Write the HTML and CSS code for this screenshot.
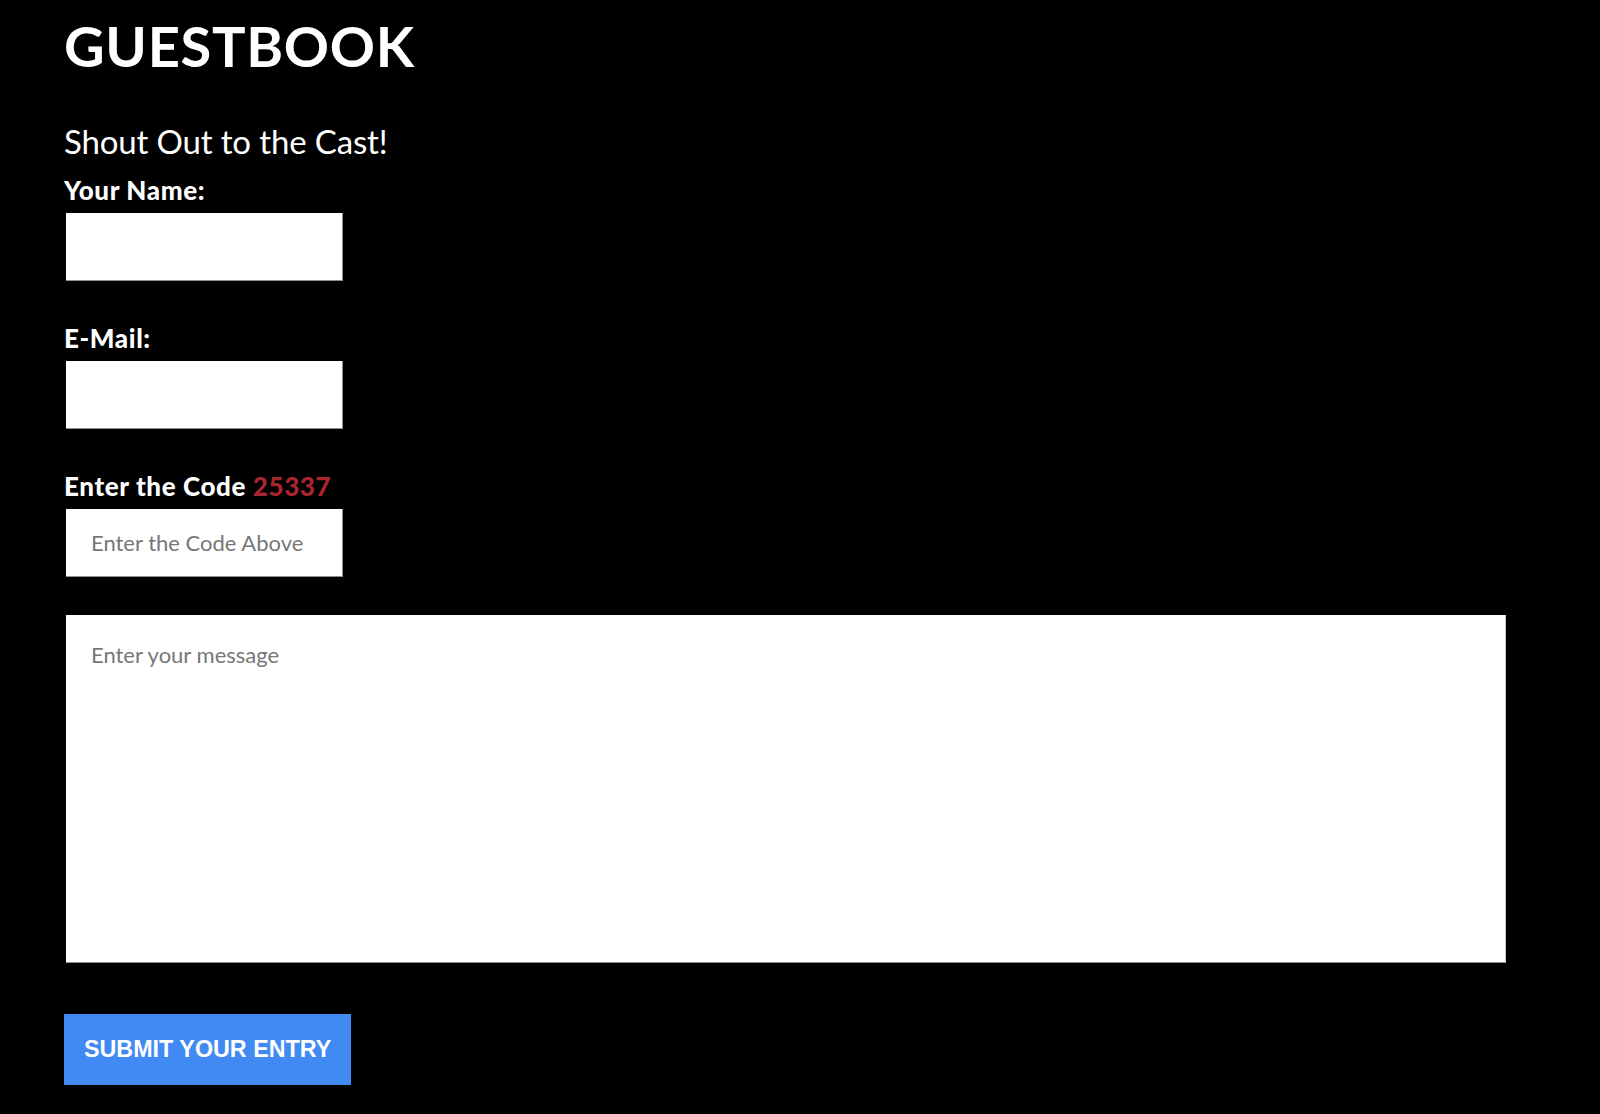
FILE: index.html
```html
<!DOCTYPE html>
<html lang="en">
<head>
  <meta charset="UTF-8">
  <meta name="viewport" content="width=device-width, initial-scale=1.0">
  <title>Guestbook</title>
  <link rel="stylesheet" href="styles.css">
</head>
<body>
  <main class="guestbook">
    <h1>GUESTBOOK</h1>
    <form class="gb-form">
      <h2>Shout Out to the Cast!</h2>

      <label for="gb-name">Your Name:</label>
      <input type="text" id="gb-name" class="field">

      <label for="gb-email" class="spaced">E-Mail:</label>
      <input type="email" id="gb-email" class="field">

      <label for="gb-code" class="spaced">Enter the Code <span class="code">25337</span></label>
      <input type="text" id="gb-code" class="field" placeholder="Enter the Code Above">

      <textarea id="gb-message" placeholder="Enter your message"></textarea>

      <button type="button" class="submit">SUBMIT YOUR ENTRY</button>
    </form>
  </main>
</body>
</html>
```

FILE: styles.css
```css
body {
  margin: 0;
  background-color: #000;
  color: #fff;
  font-family: 'Lato', 'Noto Sans', sans-serif;
}

.guestbook {
  padding: 18px 0 0 64px;
  width: 1444px;
}

h1 {
  margin: 0;
  font-size: 56px;
  line-height: 56px;
  font-weight: 700;
  letter-spacing: 0.7px;
}

.gb-form {
  display: flex;
  flex-direction: column;
  align-items: flex-start;
}

h2 {
  margin: 51px 0 0 0;
  font-size: 33px;
  line-height: 33px;
  font-weight: 400;
  letter-spacing: -0.15px;
}

label {
  display: block;
  margin-top: 20px;
  font-size: 26px;
  line-height: 25px;
  font-weight: 900;
  letter-spacing: 0.6px;
}

label.spaced {
  margin-top: 45px;
}

.code {
  color: #a8262f;
}

.field,
textarea {
  box-sizing: border-box;
  margin: 10px 0 0 2px;
  border: none;
  border-right: 1px solid #8f8f8f;
  border-bottom: 1px solid #8f8f8f;
  background: #fff;
  color: #333;
  font-family: 'Lato', 'Noto Sans', sans-serif;
  font-size: 22px;
  outline: none;
}

.field {
  width: 277px;
  height: 68px;
  padding: 0 25px;
}

textarea {
  width: 1440px;
  height: 348px;
  margin-top: 38px;
  padding: 23px 25px;
  line-height: 33px;
  resize: none;
  border-right-color: #c8c8c8;
}

::placeholder {
  color: #777;
}

.submit {
  margin-top: 51px;
  height: 71px;
  padding: 0 20px;
  border: none;
  border-radius: 0;
  background: #418af4;
  color: #fff;
  font-family: 'Liberation Sans', Arial, sans-serif;
  font-size: 23.3px;
  font-weight: 700;
  cursor: pointer;
}
```
